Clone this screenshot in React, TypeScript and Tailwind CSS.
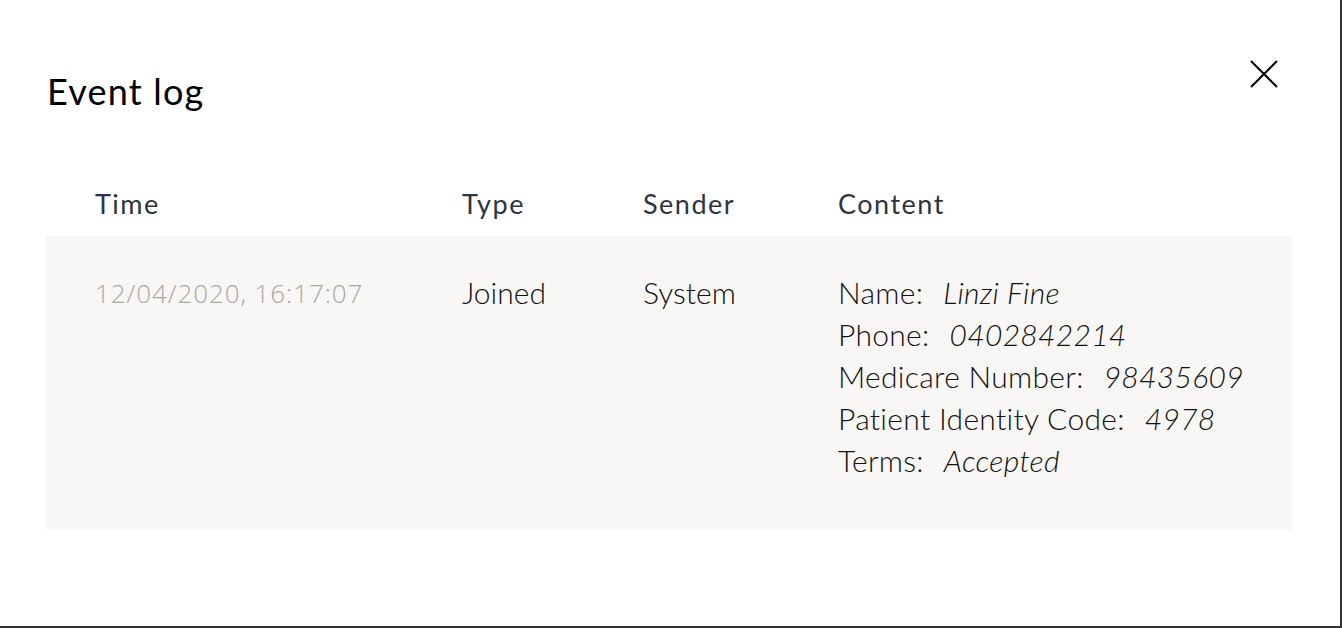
const CONTENT = [
  { label: "Name:", value: "Linzi Fine" },
  { label: "Phone:", value: "0402842214" },
  { label: "Medicare Number:", value: "98435609" },
  { label: "Patient Identity Code:", value: "4978" },
  { label: "Terms:", value: "Accepted" },
]

const COLS = "grid grid-cols-[416px_181px_195px_1fr]"

export default function App() {
  return (
    <div className="h-[628px] w-[1342px] bg-[#333333]">
      <div className="h-[626px] w-[1340px] bg-white font-['Lato',sans-serif]">
        {/* Header */}
        <div className="flex items-start justify-between pl-[47px] pr-[62px] pt-[60px]">
          <h1 className="mt-[11px] text-[36px] leading-[40px] tracking-[1.2px] text-black">Event log</h1>
          <button aria-label="Close" className="text-black">
            <svg width="28" height="28" viewBox="0 0 28 28" fill="none" stroke="currentColor" strokeWidth="2">
              <path d="M1 1L27 27M27 1L1 27" />
            </svg>
          </button>
        </div>

        {/* Table */}
        <div className="mx-[46px] mt-[77px] w-[1246px]">
          <div className={`${COLS} pb-[16px] text-[27px] font-normal leading-[32px] tracking-[1.5px] text-[#2d3340]`}>
            <div className="pl-[49px]">Time</div>
            <div>Type</div>
            <div>Sender</div>
            <div>Content</div>
          </div>
          <div className={`${COLS} bg-[#f8f7f5] pb-[49px] pt-[35px] text-[30px] font-light leading-[42px] text-[#111111]`}>
            <div className="pl-[49px] pt-[1px] font-['Open_Sans',sans-serif] text-[26px] tracking-[0.9px] text-[#aaa8a3]">
              12/04/2020, 16:17:07
            </div>
            <div>Joined</div>
            <div>System</div>
            <div className="tracking-[0.3px]">
              {CONTENT.map((c) => (
                <div key={c.label} className="whitespace-nowrap">
                  {c.label}
                  <span className="ml-[20px] italic">{c.value}</span>
                </div>
              ))}
            </div>
          </div>
        </div>
      </div>
    </div>
  )
}
